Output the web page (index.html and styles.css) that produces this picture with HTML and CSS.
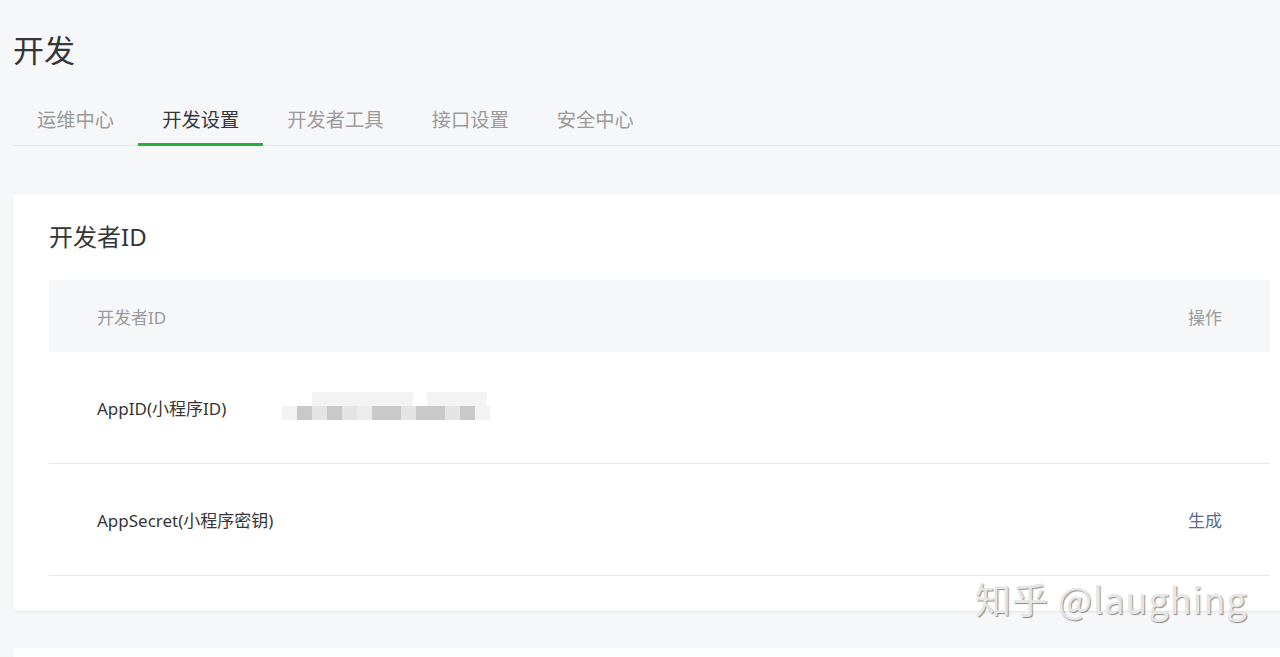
FILE: index.html
```html
<!DOCTYPE html>
<html lang="zh-CN">
<head>
<meta charset="utf-8">
<title>开发</title>
<link rel="stylesheet" href="styles.css">
</head>
<body>
<div class="page">
  <h1 class="page-title">开发</h1>
  <nav class="tabs">
    <a class="tab">运维中心</a>
    <a class="tab active">开发设置</a>
    <a class="tab">开发者工具</a>
    <a class="tab">接口设置</a>
    <a class="tab">安全中心</a>
  </nav>

  <section class="card">
    <h2 class="card-title">开发者ID</h2>
    <div class="table">
      <div class="row head">
        <div class="cell name">开发者ID</div>
        <div class="cell value"></div>
        <div class="cell op">操作</div>
      </div>
      <div class="row">
        <div class="cell name">AppID(小程序ID)</div>
        <div class="cell value">
          <div class="mosaic">
            <div class="mrow top">
              <span class="b gap30"></span>
              <span class="b w101 s1"></span>
              <span class="b gap14"></span>
              <span class="b w60 s1"></span>
            </div>
            <div class="mrow">
              <span class="b w1 s1"></span>
              <span class="b w1 s4"></span>
              <span class="b w1 s3"></span>
              <span class="b w1 s4"></span>
              <span class="b w1 s3"></span>
              <span class="b w1 s2"></span>
              <span class="b w2 s4"></span>
              <span class="b w1 s3"></span>
              <span class="b w2 s4"></span>
              <span class="b w1 s3"></span>
              <span class="b w1 s4"></span>
              <span class="b w1 s1"></span>
            </div>
          </div>
        </div>
        <div class="cell op"></div>
      </div>
      <div class="row">
        <div class="cell name">AppSecret(小程序密钥)</div>
        <div class="cell value"></div>
        <div class="cell op"><a class="link">生成</a></div>
      </div>
    </div>
  </section>

  <section class="card next"></section>

  <div class="watermark">知乎 @laughing</div>
</div>
</body>
</html>
```

FILE: styles.css
```css
* { box-sizing: border-box; }
html, body { margin: 0; padding: 0; }
body {
  background: #f6f7f9;
  font-family: "Noto Sans", "Noto Sans CJK SC", sans-serif;
  color: #353535;
  overflow: hidden;
  height: 657px;
}
.page {
  position: relative;
  padding: 26px 0 0 13px;
  width: 1306px;
}
.page-title {
  margin: 0;
  font-size: 31px;
  font-weight: 400;
  line-height: 46px;
  color: #353535;
  font-family: "Noto Sans CJK SC", sans-serif;
}
.tabs {
  display: flex;
  margin-top: 27px;
  border-bottom: 1px solid #e7e8ea;
}
.tab {
  padding: 0 24px;
  height: 47px;
  line-height: 40px;
  font-size: 19.3px;
  color: #9a9a9a;
  font-family: "Noto Sans CJK SC", sans-serif;
  border-bottom: 3px solid transparent;
  margin-bottom: -1px;
}
.tab.active {
  color: #353535;
  border-bottom-color: #2aae3a;
}
.card {
  margin-top: 48px;
  background: #fff;
  border-radius: 4px;
  box-shadow: 0 1px 2px rgba(0,0,0,0.08);
  padding: 22px 36px 35px 36px;
}
.card-title {
  margin: 0 0 22px;
  font-size: 24px;
  font-weight: 400;
  line-height: 42px;
  color: #353535;
}
.table { width: 1221px; }
.row {
  display: flex;
  align-items: center;
  height: 112px;
  border-bottom: 1px solid #e7e7e7;
  font-size: 17px;
}
.row.head {
  height: 72px;
  background: #f6f7f9;
  border-bottom: none;
  color: #9a9a9a;
}
.cell.name { width: 236px; padding-left: 48px; }
.cell.value { flex: 1; }
.cell.op { width: 120px; text-align: right; padding-right: 48px; }
.link { color: #576b95; }
.mosaic { margin-left: -3px; margin-top: -4px; }
.mrow { display: flex; height: 14px; }
.b { display: block; height: 100%; width: 15px; }
.b.w2 { width: 29px; }
.b.gap30 { width: 30px; }
.b.gap14 { width: 14px; }
.b.w101 { width: 101px; }
.b.w60 { width: 60px; }
.s1 { background: #f3f3f3; }
.s2 { background: #ececec; }
.s3 { background: #e4e4e4; }
.s4 { background: #c9c9c9; }
.card.next {
  margin-top: 37px;
  height: 120px;
  padding: 0;
}
.watermark {
  position: absolute;
  left: 975px;
  top: 572px;
  font-size: 36px;
  font-family: "Noto Sans CJK SC", sans-serif;
  color: #e6e6e6;
  text-shadow: 1px 1px 1px rgba(0,0,0,0.45);
  letter-spacing: 1px;
  white-space: nowrap;
}
```
